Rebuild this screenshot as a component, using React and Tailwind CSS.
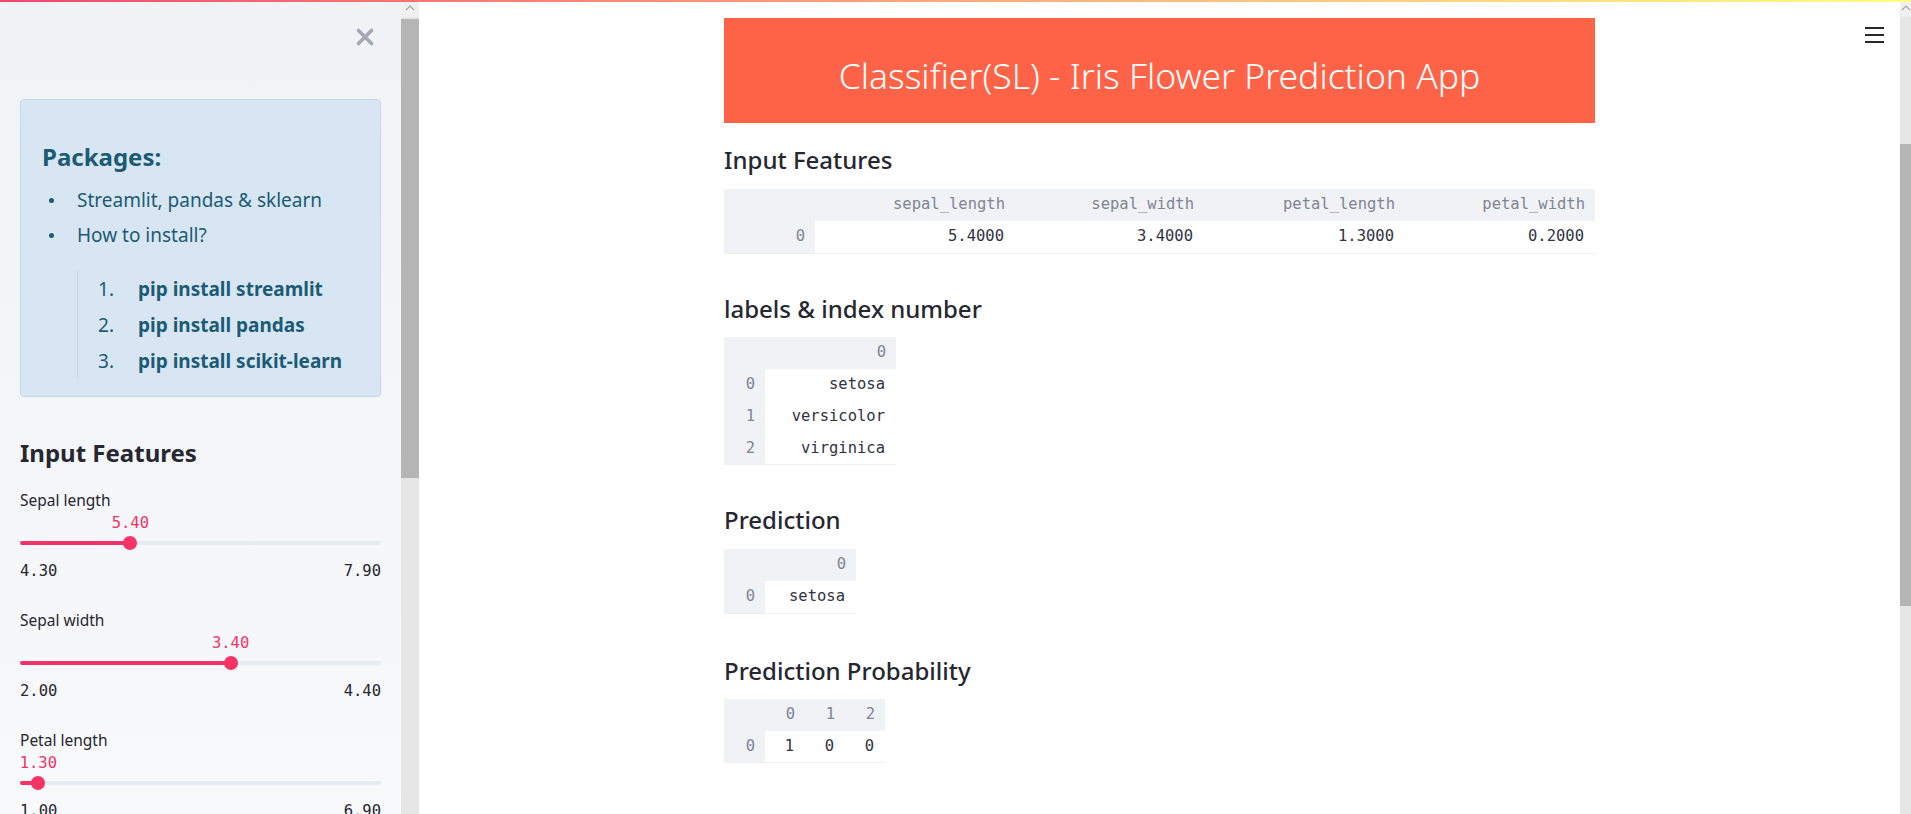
import React from 'react'

const sliders = [
  { label: 'Sepal length', min: 4.3, max: 7.9, value: 5.4 },
  { label: 'Sepal width', min: 2.0, max: 4.4, value: 3.4 },
  { label: 'Petal length', min: 1.0, max: 6.9, value: 1.3 },
]

function Slider({ label, min, max, value }) {
  const pct = ((value - min) / (max - min)) * 100
  return (
    <div className="mb-[22px]">
      <div className="h-[20px] leading-[20px] text-[15.5px] text-[#262730]">{label}</div>
      <div className="relative h-[22px]">
        <span
          className="absolute top-[2px] -translate-x-1/2 leading-[22px] text-[15.5px] text-[#f63366] font-['DejaVu_Sans_Mono',monospace]"
          style={{ left: `${pct}%` }}
        >
          {value.toFixed(2)}
        </span>
      </div>
      <div className="relative h-[22px] flex items-center">
        <div className="h-[4px] w-full rounded-full bg-[#e6eaf1]" />
        <div className="absolute left-0 h-[4px] rounded-full bg-[#f63366]" style={{ width: `${pct}%` }} />
        <div
          className="absolute w-[14px] h-[14px] -ml-[7px] rounded-full bg-[#f63366]"
          style={{ left: `${pct}%` }}
        />
      </div>
      <div className="flex justify-between h-[34px] pt-[2px] leading-[30px] text-[15.5px] text-[#262730] font-['DejaVu_Sans_Mono',monospace]">
        <span>{min.toFixed(2)}</span>
        <span>{max.toFixed(2)}</span>
      </div>
    </div>
  )
}

function DataTable({ width, colWidths, header, rows }) {
  return (
    <table className={`table-fixed border-collapse border-b border-[#eef0f4] font-['DejaVu_Sans_Mono',monospace] text-[15.5px] ${width}`}>
      <thead>
        <tr className="h-[32px]">
          {header.map((h, i) => (
            <th key={i} className={`${colWidths[i]} bg-[#f0f2f6] text-[#808495] font-normal text-right pr-[10px]`}>
              {h}
            </th>
          ))}
        </tr>
      </thead>
      <tbody>
        {rows.map((r, ri) => (
          <tr key={ri} className="h-[32px]">
            <th className="bg-[#f0f2f6] text-[#808495] font-normal text-right pr-[10px]">{ri}</th>
            {r.map((c, ci) => (
              <td key={ci} className="bg-white text-[#31333f] text-right pr-[11px]">
                {c}
              </td>
            ))}
          </tr>
        ))}
      </tbody>
    </table>
  )
}

function Heading({ children, className }) {
  return (
    <h3 className={`h-[29px] leading-[29px] text-[24px] font-medium text-[#262730] ${className}`}>{children}</h3>
  )
}

function Scrollbar({ width, thumbTop, thumbHeight }) {
  return (
    <div className={`${width} h-full flex flex-col bg-[#e6e6e6]`}>
      <div className="h-[17px] bg-[#f0f0f0] flex items-start pt-[5px] justify-center">
        <svg width="10" height="6" viewBox="0 0 10 6">
          <path d="M1 5 L5 1 L9 5" fill="none" stroke="#a3a3a3" strokeWidth="1.2" />
        </svg>
      </div>
      <div className={thumbTop} />
      <div className={`${thumbHeight} bg-[#b5b5b5]`} />
    </div>
  )
}

export default function App() {
  return (
    <div className="relative w-[1911px] h-[814px] flex overflow-hidden bg-white font-['Noto_Sans',sans-serif]">
      {/* decoration */}
      <div className="absolute top-0 left-0 right-0 h-[2px] z-10 bg-linear-to-r from-[#f0456e] to-[#fffd80]" />

      {/* sidebar */}
      <aside className="w-[401px] h-full px-5 bg-linear-to-b from-[#f0f2f6] to-[#f8f9fb] overflow-hidden">
        <div className="flex justify-end pt-[28px] pr-[7px]">
          <svg width="18" height="18" viewBox="0 0 18 18">
            <path d="M2.5 2.5 L15.5 15.5 M15.5 2.5 L2.5 15.5" stroke="#a3a8b4" strokeWidth="3.6" strokeLinecap="round" />
          </svg>
        </div>

        <div className="mt-[53px] rounded-[4px] border border-[#c3d8ec] bg-[#d8e6f3] text-[#1c5b74] pt-[42px] pb-[17px] pl-[21px]">
          <h3 className="h-[29px] leading-[29px] text-[24px] font-bold">Packages:</h3>
          <ul className="mt-[12px] text-[19px]">
            <li className="flex items-center h-[35px]">
              <span className="ml-[7px] mr-[23px] w-[5px] h-[5px] rounded-full bg-[#1c5b74]" />
              Streamlit, pandas &amp; sklearn
            </li>
            <li className="flex items-center h-[35px]">
              <span className="ml-[7px] mr-[23px] w-[5px] h-[5px] rounded-full bg-[#1c5b74]" />
              How to install?
            </li>
          </ul>
          <ol className="mt-[18px] ml-[35px] border-l border-[#c7d7e6] pl-[20px] text-[19px]">
            {['pip install streamlit', 'pip install pandas', 'pip install scikit-learn'].map((t, i) => (
              <li key={t} className="flex items-center h-[36px]">
                <span className="w-[40px]">{i + 1}.</span>
                <span className="font-bold">{t}</span>
              </li>
            ))}
          </ol>
        </div>

        <h2 className="mt-[41px] h-[29px] leading-[29px] text-[24px] font-bold text-[#262730]">Input Features</h2>
        <div className="mt-[23px]">
          {sliders.map(s => (
            <Slider key={s.label} {...s} />
          ))}
        </div>
      </aside>

      <Scrollbar width="w-[18px]" thumbTop="h-[2px]" thumbHeight="h-[459px]" />

      {/* main */}
      <main className="relative flex-1 h-full overflow-hidden">
        <div className="absolute top-[27px] right-[16px] flex flex-col gap-[5px]">
          <div className="w-[19px] h-[2px] bg-[#262730]" />
          <div className="w-[19px] h-[2px] bg-[#262730]" />
          <div className="w-[19px] h-[2px] bg-[#262730]" />
        </div>

        <div className="w-[871px] mx-auto">
          <div className="mt-[18px] h-[105px] pt-[10px] flex items-center justify-center bg-[#ff6347]">
            <h1 className="text-white text-[35.5px] font-light">Classifier(SL) - Iris Flower Prediction App</h1>
          </div>

          <Heading className="mt-[22px] mb-[15px]">Input Features</Heading>
          <DataTable
            width="w-[871px]"
            colWidths={['w-[91px]', 'w-[200px]', 'w-[189px]', 'w-[201px]', 'w-[190px]']}
            header={['', 'sepal_length', 'sepal_width', 'petal_length', 'petal_width']}
            rows={[['5.4000', '3.4000', '1.3000', '0.2000']]}
          />

          <Heading className="mt-[40px] mb-[14px]">labels &amp; index number</Heading>
          <DataTable
            width="w-[172px]"
            colWidths={['w-[41px]', 'w-[131px]']}
            header={['', '0']}
            rows={[['setosa'], ['versicolor'], ['virginica']]}
          />

          <Heading className="mt-[40px] mb-[15px]">Prediction</Heading>
          <DataTable
            width="w-[132px]"
            colWidths={['w-[41px]', 'w-[91px]']}
            header={['', '0']}
            rows={[['setosa']]}
          />

          <Heading className="mt-[42px] mb-[14px]">Prediction Probability</Heading>
          <DataTable
            width="w-[161px]"
            colWidths={['w-[41px]', 'w-[40px]', 'w-[40px]', 'w-[40px]']}
            header={['', '0', '1', '2']}
            rows={[['1', '0', '0']]}
          />
        </div>
      </main>

      <Scrollbar width="w-[11px]" thumbTop="h-[127px]" thumbHeight="h-[462px]" />
    </div>
  )
}
